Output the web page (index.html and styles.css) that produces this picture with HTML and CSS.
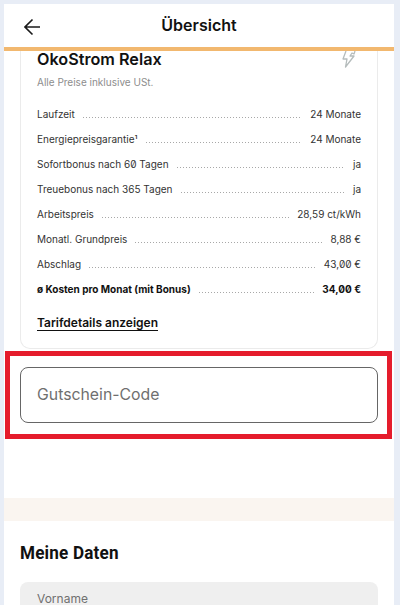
FILE: index.html
```html
<!DOCTYPE html>
<html lang="de">
<head>
<meta charset="utf-8">
<title>Übersicht</title>
<link rel="stylesheet" href="styles.css">
</head>
<body>
<div class="panel">
  <header class="topbar">
    <svg class="back" width="18" height="18" viewBox="0 0 18 18" fill="none" stroke="#1a1a1a" stroke-width="1.6"><path d="M16 9H1M8.5 1.5 1 9l7.5 7.5"/></svg>
    <h1>Übersicht</h1>
  </header>
  <main class="content">
    <section class="card">
      <div class="card-head">
        <h2>OkoStrom Relax</h2>
        <svg class="bolt" width="14" height="17" viewBox="0 0 14 17" fill="none" stroke="#b5bcbc" stroke-width="1.3" stroke-linejoin="round"><path d="M4 0 1 8h4L3.5 16 12 5H8l2-3 2 1 1-3"/></svg>
      </div>
      <p class="note">Alle Preise inklusive USt.</p>
      <dl class="rows">
        <div class="row"><dt>Laufzeit</dt><dd>24 Monate</dd></div>
        <div class="row"><dt>Energiepreisgarantie¹</dt><dd>24 Monate</dd></div>
        <div class="row"><dt>Sofortbonus nach 60 Tagen</dt><dd>ja</dd></div>
        <div class="row"><dt>Treuebonus nach 365 Tagen</dt><dd>ja</dd></div>
        <div class="row"><dt>Arbeitspreis</dt><dd>28,59 ct/kWh</dd></div>
        <div class="row"><dt>Monatl. Grundpreis</dt><dd>8,88 €</dd></div>
        <div class="row"><dt>Abschlag</dt><dd>43,00 €</dd></div>
        <div class="row total"><dt>ø Kosten pro Monat (mit Bonus)</dt><dd>34,00 €</dd></div>
      </dl>
      <a class="details" href="#">Tarifdetails anzeigen</a>
    </section>
    <div class="highlight">
      <div class="voucher">Gutschein-Code</div>
    </div>
  </main>
  <div class="band"></div>
  <section class="data">
    <h2>Meine Daten</h2>
    <div class="field">Vorname</div>
  </section>
</div>
</body>
</html>
```
FILE: styles.css
```css
* { box-sizing: border-box; }
html, body { margin: 0; height: 605px; overflow: hidden; }
body { background: #e8edf6; padding: 4px 6px 0 4px; font-family: Inter, "Liberation Sans", sans-serif; color: #1a1a1a; }
h1, h2, p, dl, dd { margin: 0; }
.panel { background: #fff; height: 601px; overflow: hidden; }
.topbar { height: 47px; border-bottom: 4px solid #f2b86f; display: flex; align-items: center; justify-content: center; position: relative; }
.back { position: absolute; left: 20px; top: 14px; }
.topbar h1 { font-size: 16px; font-weight: 600; color: #111; padding-bottom: 1px; }
.card { margin: 0 16px; height: 298px; border: 1px solid #ebebeb; border-top: 0; border-radius: 0 0 10px 10px; padding: 0 16px; }
.card-head { display: flex; justify-content: space-between; }
.card-head h2 { font-size: 16.2px; font-weight: 600; color: #111; line-height: 16px; }
.bolt { margin-right: 5px; }
.note { font-size: 10px; color: #8d8d8d; margin-top: 7px; line-height: 14px; }
.rows { margin-top: 18px; font-variant-numeric: slashed-zero; }
.row { display: flex; align-items: baseline; gap: 8px; height: 25px; font-size: 10px; color: #333; line-height: 14px; }
.row dt, .row dd { flex: none; }
.row dd { order: 2; }
.row::before { content: ""; order: 1; flex: 1; height: 1px; background: repeating-linear-gradient(90deg, #a8a8a8 0 1px, transparent 1px 3px); }
.total { color: #111; font-weight: 700; }
.details { display: inline-block; margin-top: 8px; font-size: 12px; font-weight: 600; color: #111; text-decoration: none; border-bottom: 1px solid #111; line-height: 15px; }
.highlight { margin: 2px 2px 0 1px; height: 88px; border: 5px solid #e51c2c; padding: 11px 9px 0 10px; }
.voucher { height: 56px; border: 1px solid #666; border-radius: 8px; padding: 0 16px 2px; display: flex; align-items: center; font-size: 15.8px; color: #6f6f6f; }
.band { height: 23px; margin-top: 59px; background: #faf5f0; }
.data { padding: 21px 16px 0; }
.data h2 { font-family: Roboto, sans-serif; font-size: 19px; font-weight: 700; letter-spacing: .2px; color: #111; line-height: 22px; width: max-content; transform: scaleX(.9); transform-origin: left; }
.field { margin-top: 18px; height: 23px; background: #efefef; border-radius: 8px 8px 0 0; padding: 11px 17px 0; font-size: 12px; line-height: 12px; color: #707070; }
```
